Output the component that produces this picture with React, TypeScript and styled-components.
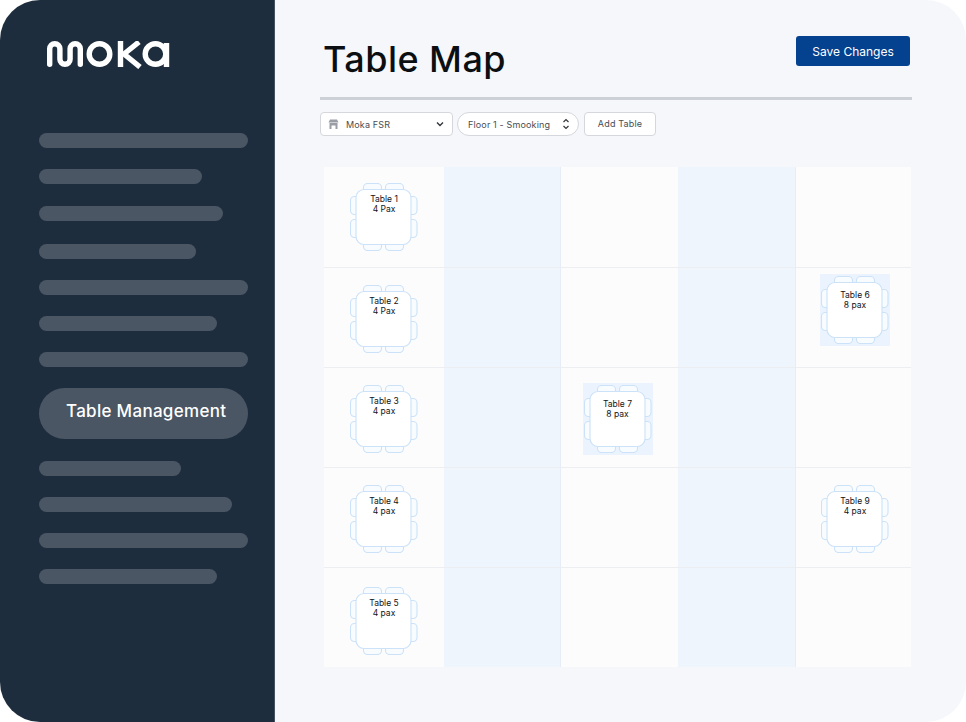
import styled, { createGlobalStyle } from "styled-components";

const GlobalStyle = createGlobalStyle`
  html, body {
    margin: 0;
    padding: 0;
    background: #ffffff;
  }
`;

const Frame = styled.div`
  display: flex;
  width: 966px;
  height: 722px;
  border-radius: 40px;
  overflow: hidden;
  background: #f5f7fb;
  font-family: "Inter", "Liberation Sans", sans-serif;
`;

const Sidebar = styled.aside`
  flex: 0 0 275px;
  box-sizing: border-box;
  padding: 41px 0 0 39px;
  background: #1e2d3d;
  border-right: 1px solid #46525f;
`;

const LogoMark = styled.svg`
  display: block;
  width: 124px;
  height: 28px;
  margin: 0 0 64px 7px;
`;

const Menu = styled.nav`
  display: flex;
  flex-direction: column;
  align-items: flex-start;
`;

const MenuBar = styled.div<{ $width: number; $after: number }>`
  width: ${(props) => props.$width}px;
  height: 15px;
  margin-bottom: ${(props) => props.$after}px;
  border-radius: 8px;
  background: #4a5663;
`;

const ActiveItem = styled.div`
  box-sizing: border-box;
  width: 209px;
  height: 51px;
  margin-bottom: 22px;
  padding-left: 27px;
  border-radius: 26px;
  background: #4a5663;
  color: #ffffff;
  font-size: 17px;
  font-weight: 500;
  letter-spacing: 0.3px;
  line-height: 47px;
`;

const Main = styled.main`
  flex: 1;
  padding: 0 54px 0 45px;
`;

const Header = styled.header`
  display: flex;
  justify-content: space-between;
  align-items: flex-start;
  height: 97px;
  border-bottom: 3px solid #cdd0d7;
`;

const Title = styled.h1`
  margin: 36px 0 0 3px;
  color: #0c0f12;
  font-size: 36px;
  font-weight: 500;
  letter-spacing: 0.45px;
  line-height: 46px;
`;

const SaveButton = styled.button`
  width: 114px;
  height: 30px;
  margin: 36px 2px 0 0;
  padding: 0;
  border: none;
  border-radius: 3px;
  background: #04418f;
  color: #ffffff;
  font-family: "Inter", "Liberation Sans", sans-serif;
  font-size: 12px;
`;

const Toolbar = styled.div`
  display: flex;
  gap: 4px;
  height: 24px;
  margin-top: 12px;
  font-size: 9px;
  letter-spacing: 0.15px;
  color: #4a4d52;
`;

const Control = styled.div<{ $width: number; $pill?: boolean }>`
  display: flex;
  align-items: center;
  box-sizing: border-box;
  width: ${(props) => props.$width}px;
  height: 24px;
  padding: 0 8px 0 7px;
  border: 1px solid #d5d7dc;
  border-radius: ${(props) => (props.$pill ? "12px" : "4px")};
  background: #ffffff;
`;

const ControlLabel = styled.span`
  flex: 1;
  margin-left: 7px;
`;

const FloorLabel = styled.span`
  flex: 1;
  margin-left: 3px;
`;

const AddButton = styled(Control)`
  justify-content: center;
  padding: 0 0 2px;
  margin-left: 1px;
`;

const FloorGrid = styled.div`
  display: grid;
  grid-template-columns: 120px 117px 117px 118px 115px;
  grid-template-rows: 101px 100px 100px 100px 99px;
  width: 587px;
  height: 500px;
  margin: 31px 0 0 4px;
  background: #fcfcfd;
`;

const Cell = styled.div<{ $shade: boolean; $last: boolean }>`
  display: flex;
  align-items: center;
  justify-content: center;
  box-sizing: border-box;
  background: ${(props) => (props.$shade ? "#eef5fd" : "transparent")};
  border-bottom: ${(props) => (props.$last ? "none" : "1px solid #eceef1")};
  border-right: ${(props) => (props.$shade ? "1px solid #e6edf7" : "none")};
`;

const TableSpot = styled.div<{ $x: number; $y: number; $picked?: boolean }>`
  position: relative;
  width: ${(props) => (props.$picked ? 70 : 68)}px;
  height: ${(props) => (props.$picked ? 72 : 68)}px;
  margin: ${(props) => props.$y}px 0 0 ${(props) => props.$x}px;
  background: ${(props) => (props.$picked ? "#ebf4fe" : "transparent")};
`;

const TableDrawing = styled.svg`
  position: absolute;
  left: 50%;
  top: 50%;
  width: 68px;
  height: 68px;
  transform: translate(-50%, -50%);
`;

const TableLabel = styled.div<{ $picked?: boolean }>`
  position: absolute;
  left: 0;
  right: 0;
  top: 50%;
  margin-top: ${(props) => (props.$picked ? -20 : -23)}px;
  color: #111418;
  font-size: 8.5px;
  line-height: 10px;
  text-align: center;
`;

function MokaLogo() {
  return (
    <LogoMark viewBox="0 0 124 28" fill="none" stroke="#ffffff" strokeWidth="5.4" strokeLinecap="round">
      <path d="M3.7 23.3 V7.8 a5.1 5.1 0 0 1 10.2 0 V18.2 a5.1 5.1 0 0 0 10.2 0 V7.8 a5.1 5.1 0 0 1 10.2 0 V23.3" />
      <circle cx="53.5" cy="13" r="10.3" />
      <path d="M74.5 0 V26" strokeLinecap="butt" />
      <path d="M93 1 L78 13 L94 26" strokeLinecap="butt" strokeLinejoin="round" />
      <circle cx="109.5" cy="13" r="10.3" />
      <path d="M120.5 2 V26" strokeLinecap="butt" />
    </LogoMark>
  );
}

function Chairs() {
  return (
    <g fill="#f9fcff" stroke="#cbe2f8" strokeWidth="1.1">
      <rect x="13.5" y="0.5" width="18" height="10" rx="4" />
      <rect x="35.5" y="0.5" width="18" height="10" rx="4" />
      <rect x="13.5" y="57.5" width="18" height="10" rx="4" />
      <rect x="35.5" y="57.5" width="18" height="10" rx="4" />
      <rect x="0.5" y="13.5" width="10" height="18" rx="4" />
      <rect x="0.5" y="36.5" width="10" height="18" rx="4" />
      <rect x="57" y="13.5" width="10" height="18" rx="4" />
      <rect x="57" y="36.5" width="10" height="18" rx="4" />
      <rect x="6" y="6.5" width="55" height="55" rx="8" fill="#ffffff" />
    </g>
  );
}

type TableData = {
  col: number;
  row: number;
  name: string;
  pax: string;
  x: number;
  y: number;
  picked?: boolean;
};

const tables: TableData[] = [
  { col: 0, row: 0, name: "Table 1", pax: "4 Pax", x: 0, y: 0 },
  { col: 0, row: 1, name: "Table 2", pax: "4 Pax", x: 0, y: 2 },
  { col: 0, row: 2, name: "Table 3", pax: "4 pax", x: 0, y: 2 },
  { col: 0, row: 3, name: "Table 4", pax: "4 pax", x: 0, y: 2 },
  { col: 0, row: 4, name: "Table 5", pax: "4 pax", x: 0, y: 6 },
  { col: 4, row: 1, name: "Table 6", pax: "8 pax", x: 3, y: -15, picked: true },
  { col: 2, row: 2, name: "Table 7", pax: "8 pax", x: -4, y: 3, picked: true },
  { col: 4, row: 3, name: "Table 9", pax: "4 pax", x: 3, y: 2 },
];

const menuTop = [
  { width: 209, after: 21 },
  { width: 163, after: 22 },
  { width: 184, after: 23 },
  { width: 157, after: 21 },
  { width: 209, after: 21 },
  { width: 178, after: 21 },
  { width: 209, after: 21 },
];
const menuBottom = [
  { width: 142, after: 21 },
  { width: 193, after: 21 },
  { width: 209, after: 21 },
  { width: 178, after: 21 },
];

export default function App() {
  const cells = [];
  for (let row = 0; row < 5; row++) {
    for (let col = 0; col < 5; col++) {
      const table = tables.find((t) => t.col === col && t.row === row);
      cells.push(
        <Cell key={`${row}-${col}`} $shade={col === 1 || col === 3} $last={row === 4}>
          {table && (
            <TableSpot $x={table.x} $y={table.y} $picked={table.picked}>
              <TableDrawing viewBox="0 0 68 68">
                <Chairs />
              </TableDrawing>
              <TableLabel $picked={table.picked}>
                {table.name}
                <br />
                {table.pax}
              </TableLabel>
            </TableSpot>
          )}
        </Cell>
      );
    }
  }

  return (
    <Frame>
      <GlobalStyle />
      <Sidebar>
        <MokaLogo />
        <Menu>
          {menuTop.map((bar, i) => (
            <MenuBar key={i} $width={bar.width} $after={bar.after} />
          ))}
          <ActiveItem>Table Management</ActiveItem>
          {menuBottom.map((bar, i) => (
            <MenuBar key={i} $width={bar.width} $after={bar.after} />
          ))}
        </Menu>
      </Sidebar>
      <Main>
        <Header>
          <Title>Table Map</Title>
          <SaveButton>Save Changes</SaveButton>
        </Header>
        <Toolbar>
          <Control $width={133}>
            <svg width="11" height="10" viewBox="0 0 10 10" fill="#9a9da3">
              <path d="M1.5 0.5 H8.5 L10 3.5 H0 Z" />
              <path d="M1 4 H9 V10 H7 V6.5 H3 V10 H1 Z" />
            </svg>
            <ControlLabel>Moka FSR</ControlLabel>
            <svg width="8" height="6" viewBox="0 0 8 6" fill="none" stroke="#33363a" strokeWidth="1.4">
              <path d="M1 1.5 L4 4.5 L7 1.5" />
            </svg>
          </Control>
          <Control $width={122} $pill>
            <FloorLabel>Floor 1 - Smooking</FloorLabel>
            <svg width="8" height="12" viewBox="0 0 8 12" fill="none" stroke="#33363a" strokeWidth="1.2">
              <path d="M1.5 4 L4 1.5 L6.5 4" />
              <path d="M1.5 8 L4 10.5 L6.5 8" />
            </svg>
          </Control>
          <AddButton $width={72}>Add Table</AddButton>
        </Toolbar>
        <FloorGrid>{cells}</FloorGrid>
      </Main>
    </Frame>
  );
}
